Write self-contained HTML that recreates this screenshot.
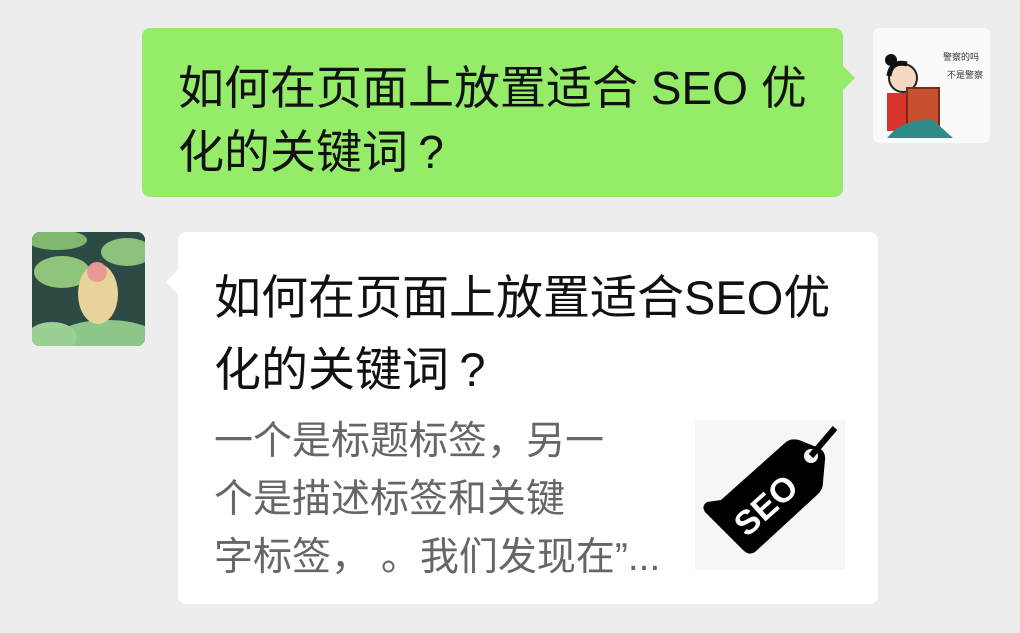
<!DOCTYPE html>
<html><head><meta charset="utf-8"><style>
body{margin:0;width:1020px;height:633px;background:#ededed;position:relative;overflow:hidden;font-family:"Liberation Sans","Noto Sans CJK SC",sans-serif}
.g{position:absolute;left:142px;top:28px;width:701px;height:169px;background:#95ec69;border-radius:8px}
.g:after{content:"";position:absolute;right:-12px;top:38px;border:12px solid transparent;border-left-color:#95ec69;border-right:0}
.gt{position:absolute;left:178px;top:56px;width:680px;font-size:46px;line-height:64px;color:#111;white-space:nowrap}
.w{position:absolute;left:178px;top:232px;width:700px;height:372px;background:#fff;border-radius:8px}
.w:after{content:"";position:absolute;left:-12px;top:38px;border:12px solid transparent;border-right-color:#fff;border-left:0}
.wt{position:absolute;left:214px;top:262px;width:660px;font-size:47px;line-height:72px;color:#111;white-space:nowrap}
.d{position:absolute;left:214px;top:413px;width:470px;font-size:39px;line-height:58px;color:#666;white-space:nowrap}
.th{position:absolute;left:695px;top:420px;width:150px;height:150px;background:#f6f6f6}
.av1{position:absolute;left:873px;top:28px;width:117px;height:115px;background:#fafafa;border-radius:6px;overflow:hidden}
.av2{position:absolute;left:32px;top:232px;width:113px;height:114px;border-radius:8px;overflow:hidden;background:#3a5a50}
.q{display:inline-block;width:1em;text-align:center}
</style></head><body>
<div class="g"></div>
<div class="gt">如何在页面上放置适合 SEO 优<br>化的关键词<span class="q">?</span></div>
<div class="av1"><svg width="117" height="115">
<circle cx="18" cy="32" r="6" fill="#111"/><circle cx="30" cy="50" r="14" fill="#f3d9c4" stroke="#222" stroke-width="2"/>
<path d="M16 48 Q18 32 34 36" stroke="#111" stroke-width="5" fill="none"/>
<rect x="14" y="65" width="22" height="38" fill="#d9342b"/>
<rect x="34" y="60" width="32" height="40" fill="#c9502e" stroke="#7a2a1a" stroke-width="2"/>
<path d="M14 110 Q30 90 60 92 L80 110Z" fill="#2f8a8a"/>
<text x="70" y="32" font-size="9" fill="#333">警察的吗</text><text x="74" y="50" font-size="9" fill="#333">不是警察</text>
</svg></div>
<div class="w"></div>
<div class="wt">如何在页面上放置适合SEO优<br>化的关键词<span class="q">?</span></div>
<div class="d">一个是标题标签，另一<br>个是描述标签和关键<br>字标签，&nbsp;。我们发现在”...</div>
<div class="th"><svg width="150" height="150">
<path d="M30 80 L95 22 Q100 18 108 20 L128 28 Q135 32 134 40 L132 62 Q132 70 126 75 L64 132 Q58 136 52 130 L14 92 Q10 86 16 82Z" fill="#000" transform="translate(-4,0)"/>
<circle cx="116" cy="36" r="7" fill="#f6f6f6"/>
<path d="M116 36 L140 8" stroke="#000" stroke-width="6"/>
<text x="0" y="0" font-size="34" font-weight="bold" fill="#fff" transform="translate(52,118) rotate(-42)">SEO</text>
</svg></div>
<div class="av2"><svg width="113" height="114">
<rect width="113" height="114" fill="#2d4a45"/>
<ellipse cx="30" cy="40" rx="28" ry="16" fill="#8fc47a"/><ellipse cx="95" cy="20" rx="26" ry="14" fill="#8cc27d"/>
<ellipse cx="75" cy="110" rx="55" ry="22" fill="#8dc68a"/><ellipse cx="20" cy="105" rx="25" ry="15" fill="#9ccf93"/>
<ellipse cx="25" cy="8" rx="30" ry="10" fill="#80b870"/>
<ellipse cx="66" cy="62" rx="20" ry="30" fill="#e8d39a"/><ellipse cx="65" cy="40" rx="10" ry="10" fill="#e89a90"/>
</svg></div>
</body></html>
